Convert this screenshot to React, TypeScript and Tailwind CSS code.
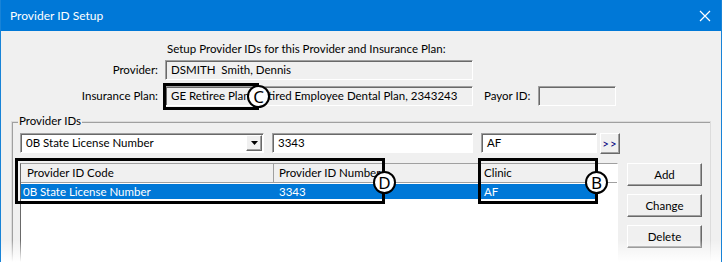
import React from "react";

const font = { fontFamily: "Lato, 'Noto Sans', sans-serif" };

function Sunken({ className, children }: { className: string; children?: React.ReactNode }) {
  return (
    <div
      className={`flex items-center overflow-hidden border border-t-[#a0a0a0] border-l-[#a0a0a0] border-b-white border-r-white shadow-[inset_1px_1px_0_#696969] px-[5px] text-[11.5px] text-black ${className}`}
    >
      {children}
    </div>
  );
}

function Button({ className, children }: { className: string; children: React.ReactNode }) {
  return (
    <div
      className={`flex items-center justify-center bg-[#f0f0f0] border border-t-white border-l-white border-b-[#696969] border-r-[#696969] shadow-[inset_-1px_-1px_0_#a0a0a0] text-[11.5px] text-black ${className}`}
    >
      {children}
    </div>
  );
}

function Badge({ letter, x, y }: { letter: string; x: number; y: number }) {
  return (
    <div
      className="absolute flex items-center justify-center w-[23px] h-[23px] rounded-full bg-white border-2 border-black text-[17px] leading-none text-black"
      style={{ left: x - 11, top: y - 11, fontFamily: "'Noto Sans', sans-serif" }}
    >
      {letter}
    </div>
  );
}

export default function App() {
  return (
    <div className="relative w-[722px] h-[262px] overflow-hidden bg-[#f0f0f0] border-x border-[#1883d7] text-[11.5px]" style={font}>
      {/* Title bar */}
      <div className="flex items-center justify-between h-[31px] bg-[#0078d7] pl-[9px] pr-[9px] text-white text-[12px]">
        <span>Provider ID Setup</span>
        <svg width="12" height="12" viewBox="0 0 12 12" className="mr-[1px]">
          <path d="M1 1 L11 11 M11 1 L1 11" stroke="white" strokeWidth="1.2" />
        </svg>
      </div>

      {/* Header fields */}
      <div className="pl-[166px] pt-[10px] leading-[16px] text-black">
        Setup Provider IDs for this Provider and Insurance Plan:
      </div>
      <div className="flex items-center mt-[3px] h-[20px]">
        <div className="w-[157px] text-right">Provider:</div>
        <Sunken className="ml-[7px] w-[308px] h-[20px]">DSMITH&nbsp;&nbsp;Smith, Dennis</Sunken>
      </div>
      <div className="flex items-center mt-[6px] h-[20px]">
        <div className="w-[157px] text-right">Insurance Plan:</div>
        <Sunken className="ml-[7px] w-[308px] h-[20px] whitespace-nowrap">
          GE Retiree Plan, Retired Employee Dental Plan, 2343243
        </Sunken>
        <div className="ml-[11px]">Payor ID:</div>
        <Sunken className="ml-[8px] w-[78px] h-[20px]" />
      </div>

      {/* Group box */}
      <div className="relative ml-[10px] mt-[15px] w-[700px] h-[160px] border border-[#dcdcdc] shadow-[inset_1px_1px_0_#a0a0a0]">
        <div className="absolute left-[6px] top-[-9px] bg-[#f0f0f0] px-[1px] leading-[16px]">Provider IDs</div>

        <div className="flex items-start pt-[11px] pl-[8px]">
          <Sunken className="w-[244px] h-[20px] bg-white !pr-[1px] justify-between whitespace-nowrap">
            <span>0B State License Number</span>
            <Button className="w-[16px] h-[16px]">
              <svg width="7" height="4" viewBox="0 0 7 4">
                <path d="M0 0 H7 L3.5 4 Z" fill="black" />
              </svg>
            </Button>
          </Sunken>
          <Sunken className="ml-[8px] w-[201px] h-[20px] bg-white">3343</Sunken>
          <Sunken className="ml-[8px] w-[116px] h-[20px] bg-white">AF</Sunken>
          <Button className="ml-[3px] w-[20px] h-[21px] !text-[#000080] tracking-[1px]">&gt;&gt;</Button>
        </div>

        <div className="flex pl-[8px] mt-[9px]">
          {/* List view */}
          <div className="w-[598px] h-[120px] bg-white border border-t-[#a0a0a0] border-l-[#696969] border-b-white border-r-white">
            <div className="flex h-[19px] bg-[#f0f0f0] border-b border-[#a0a0a0]">
              <div className="w-[253px] pl-[6px] flex items-center border-r border-[#a0a0a0]">Provider ID Code</div>
              <div className="w-[205px] pl-[5px] flex items-center border-r border-[#a0a0a0]">Provider ID Number</div>
              <div className="w-[117px] pl-[5px] flex items-center border-r border-[#a0a0a0]">Clinic</div>
              <div className="flex-1 bg-white" />
            </div>
            <div className="flex mt-[1px] h-[15px] w-[577px] bg-[#0078d7] text-white leading-[15px]">
              <div className="w-[253px] pl-[2px]">0B State License Number</div>
              <div className="w-[205px] pl-[5px]">3343</div>
              <div className="w-[117px] pl-[5px]">AF</div>
            </div>
          </div>

          {/* Buttons */}
          <div className="flex flex-col ml-[9px] gap-[8px]">
            <Button className="w-[75px] h-[23px]">Add</Button>
            <Button className="w-[75px] h-[23px]">Change</Button>
            <Button className="w-[75px] h-[23px]">Delete</Button>
          </div>
        </div>
      </div>

      {/* Annotations */}
      <div className="absolute left-[162px] top-[83px] w-[96px] h-[27px] border-[3px] border-black" />
      <Badge letter="C" x={257} y={96} />
      <div className="absolute left-[14px] top-[158px] w-[370px] h-[46px] border-[3px] border-black" />
      <Badge letter="D" x={383} y={182} />
      <div className="absolute left-[477px] top-[158px] w-[120px] h-[46px] border-[3px] border-black" />
      <Badge letter="B" x={595} y={182} />

      {/* Fade out */}
      <div className="absolute left-0 right-0 bottom-0 h-[22px] bg-gradient-to-b from-transparent to-white" />
    </div>
  );
}
